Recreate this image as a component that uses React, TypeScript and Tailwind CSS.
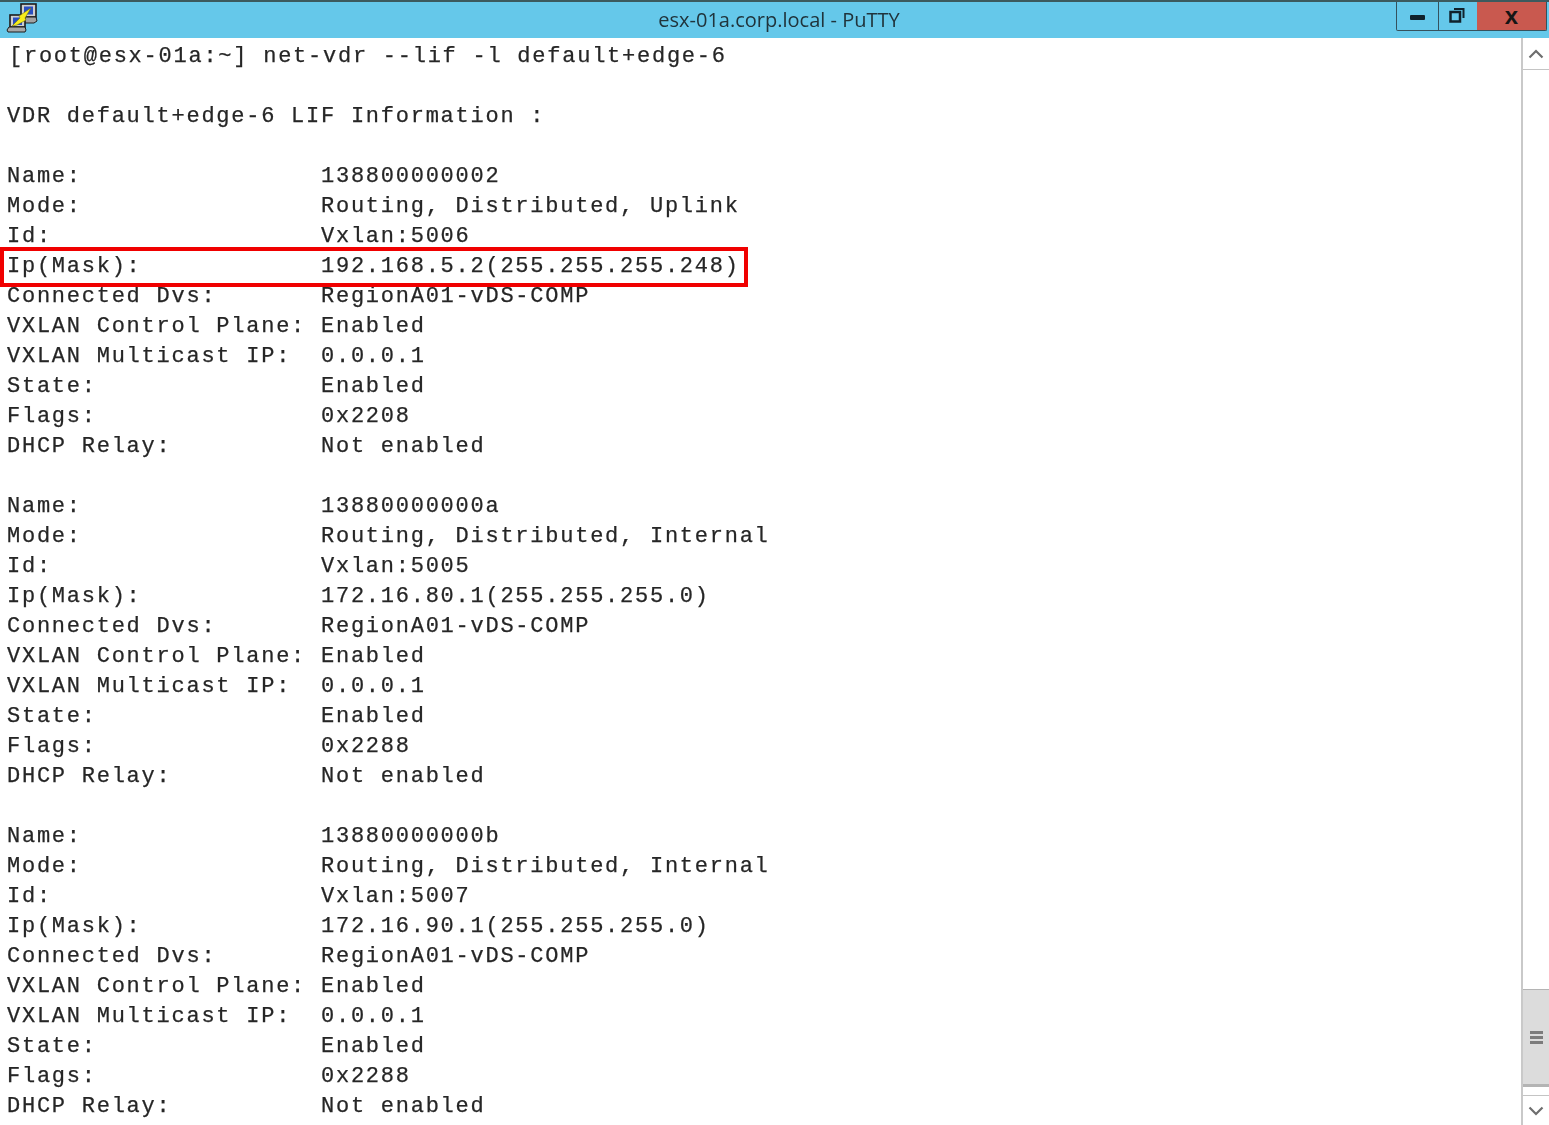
import React from 'react';

const lif = (name: string, mode: string, id: string, ip: string, flags: string) => [
  `Name:                ${name}`,
  `Mode:                Routing, Distributed, ${mode}`,
  `Id:                  Vxlan:${id}`,
  `Ip(Mask):            ${ip}`,
  'Connected Dvs:       RegionA01-vDS-COMP',
  'VXLAN Control Plane: Enabled',
  'VXLAN Multicast IP:  0.0.0.1',
  'State:               Enabled',
  `Flags:               ${flags}`,
  'DHCP Relay:          Not enabled',
];

const lines = [
  'VDR default+edge-6 LIF Information :',
  '',
  ...lif('138800000002', 'Uplink', '5006', '192.168.5.2(255.255.255.248)', '0x2208'),
  '',
  ...lif('13880000000a', 'Internal', '5005', '172.16.80.1(255.255.255.0)', '0x2288'),
  '',
  ...lif('13880000000b', 'Internal', '5007', '172.16.90.1(255.255.255.0)', '0x2288'),
];

function PuttyIcon() {
  return (
    <svg width="32" height="31" viewBox="0 0 32 31">
      <rect x="15" y="2" width="15" height="13" fill="#cfcfcf" stroke="#1c1c1c" strokeWidth="1.6" />
      <rect x="18" y="4.5" width="9" height="8" fill="#2a4fc0" />
      <path d="M15 15h15l1 4-3 2H15z" fill="#a2a2a2" stroke="#1c1c1c" />
      <rect x="4" y="13" width="15" height="12" fill="#cfcfcf" stroke="#1c1c1c" strokeWidth="1.6" />
      <rect x="7" y="15.5" width="9" height="7.5" fill="#2a4fc0" />
      <path d="M3 25h16l1 3-1 2H2l-1-2z" fill="#a8a8a8" stroke="#1c1c1c" />
      <path d="M6 24 14 16l-1-2 12-8-6 10 1 2-9 5z" fill="#f7ee1a" stroke="#77730f" strokeWidth="0.6" />
    </svg>
  );
}

export default function App() {
  return (
    <div className="w-[1549px] h-[1125px] overflow-hidden bg-white flex flex-col">
      <div className="h-[38px] shrink-0 bg-[#65c8ea] border-t-2 border-[#3c5a5e] grid grid-cols-[1fr_auto_1fr] items-start">
        <div className="pl-[6px]">
          <PuttyIcon />
        </div>
        <div className="pl-[9px] pt-[5px] text-[20px] leading-[26px] text-[#20343c] font-['Open_Sans',sans-serif] blur-[0.3px]">
          esx-01a.corp.local - PuTTY
        </div>
        <div className="justify-self-end flex h-[29px] mr-[2px] border border-t-0 border-[#34525e] rounded-b-[2px]">
          <div className="w-[42px] flex items-center justify-center border-r border-[#34525e]">
            <div className="w-[15px] h-[5px] mt-[3px] bg-[#10222c] rounded-[1px]" />
          </div>
          <div className="w-[38px] flex items-center justify-center">
            <svg width="16" height="16" viewBox="0 0 16 16" fill="none" stroke="#10222c" strokeWidth="2" className="mb-[3px] mr-[3px]">
              <rect x="1.5" y="5" width="9.5" height="9.5" strokeWidth="2.5" />
              <path d="M5 2h9.5v9" />
            </svg>
          </div>
          <div className="w-[69px] flex items-center justify-center bg-[#c9594f] text-[24px] leading-[24px] font-bold text-[#151515] font-['Liberation_Sans',sans-serif]">
            x
          </div>
        </div>
      </div>

      <div className="flex-1 flex min-h-0">
        <div className="relative flex-1 pl-[7px] pt-[4px] font-['Liberation_Mono',monospace] text-[22px] tracking-[1.75px] leading-[30px] text-[#262626] whitespace-pre blur-[0.35px] [-webkit-text-stroke:0.25px_#262626]">
          <div className="pl-[2px]">[root@esx-01a:~] net-vdr --lif -l default+edge-6</div>
          <div className="h-[30px]" />
          {lines.map((line, i) => (
            <div key={i} className="h-[30px]">
              {line}
            </div>
          ))}
          <div className="absolute left-0 top-[209px] w-[748px] h-[40px] border-[4px] border-[#f00000]" />
        </div>

        <div className="w-[28px] shrink-0 flex flex-col border-l-2 border-[#c9c9c9] bg-white">
          <div className="h-[32px] flex items-center justify-center border-b border-[#c4c4c4]">
            <svg width="16" height="10" viewBox="0 0 16 10" fill="none" stroke="#6e6e6e" strokeWidth="2.2">
              <path d="M1.5 8.5 8 2l6.5 6.5" />
            </svg>
          </div>
          <div className="flex-1" />
          <div className="h-[98px] bg-[#dcdcdc] border-t border-b-[3px] border-[#b4b4b4] flex items-center justify-center">
            <div className="w-[13px] flex flex-col gap-[2px]">
              <div className="h-[3px] bg-[#7c7c7c]" />
              <div className="h-[3px] bg-[#7c7c7c]" />
              <div className="h-[3px] bg-[#7c7c7c]" />
            </div>
          </div>
          <div className="h-[8px]" />
          <div className="h-[30px] flex items-center justify-center border-t border-[#c4c4c4]">
            <svg width="16" height="10" viewBox="0 0 16 10" fill="none" stroke="#6e6e6e" strokeWidth="2.2">
              <path d="M1.5 1.5 8 8l6.5-6.5" />
            </svg>
          </div>
        </div>
      </div>
    </div>
  );
}
